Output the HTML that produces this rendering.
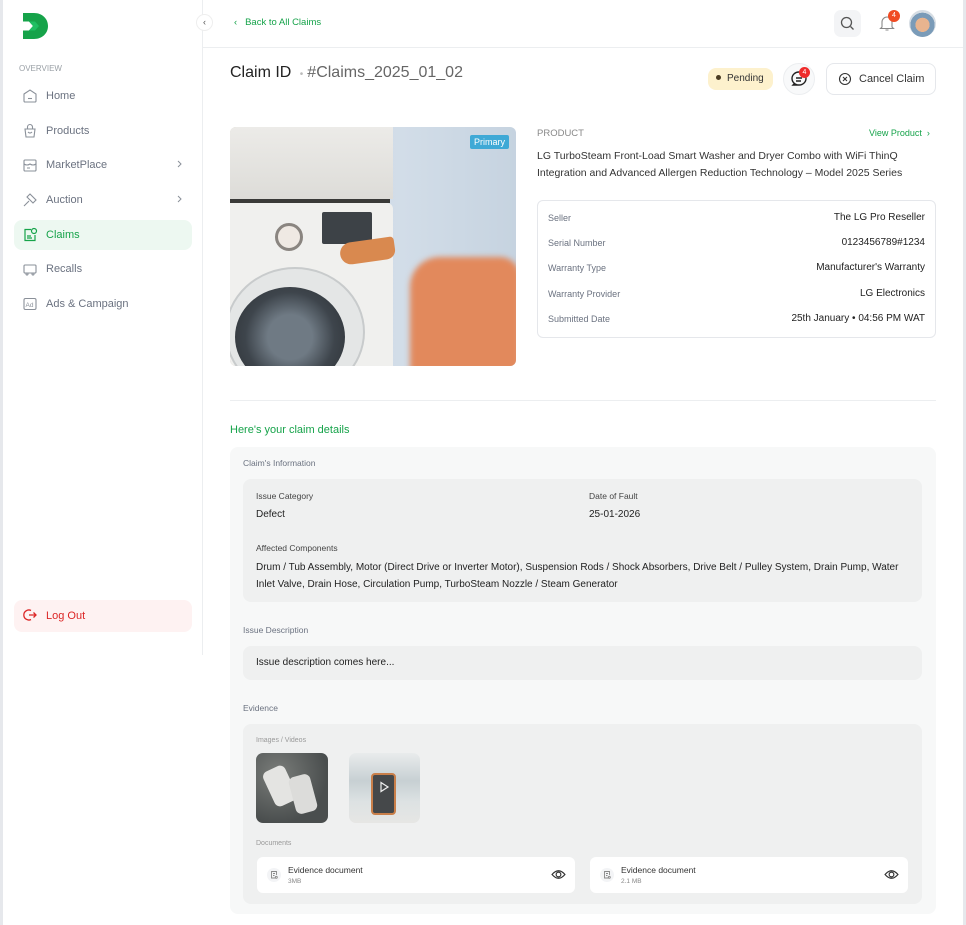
<!DOCTYPE html>
<html><head><meta charset="utf-8"><style>
*{box-sizing:border-box;margin:0;padding:0}
body{width:966px;height:925px;overflow:hidden;background:#fff;font-family:"Liberation Sans",sans-serif;color:#1f2328;position:relative}
.abs{position:absolute}
.strip{position:absolute;top:0;bottom:0;background:#e6e8ec}
.side{left:3px;top:0;width:200px;height:655px;border-right:1px solid #eceef0;position:absolute}
.nav{position:absolute;left:14px;width:178px;height:30px;border-radius:8px;display:flex;align-items:center;padding-left:32px;font-size:11px;color:#6b7280}
.nav svg{position:absolute;left:8px;top:7px}
.nav .ch{position:absolute;right:8px;top:8px;left:auto}
.lbl{font-size:9px;color:#6b7280}
.val{font-size:10px;color:#222}
.row{position:absolute;left:548px;width:377px;display:flex;justify-content:space-between;align-items:center}
.box{position:absolute;background:#eff0f0;border-radius:8px}
</style></head><body>
<div class="strip" style="left:0;width:3px"></div>
<div class="strip" style="right:0;width:3px"></div>
<div class="side"></div>
<!-- logo -->
<svg class="abs" style="left:22px;top:12px" width="27" height="28" viewBox="0 0 27 28"><path d="M1 1h11c8 0 14 5.5 14 13S20 27 12 27H1v-8.5h6L11 14 7 9.5H1z" fill="#16a34a"/><path d="M7 9.5L11 14l-4 4.5h6l4-4.5-4-4.5z" fill="#1fbf62"/></svg>
<div class="abs" style="left:196px;top:14px;width:17px;height:17px;border-radius:50%;background:#fff;border:1px solid #eee;font-size:9px;color:#555;text-align:center;line-height:15px">‹</div>
<div class="abs" style="left:19px;top:64px;font-size:8px;color:#9aa0a6">OVERVIEW</div>
<div class="nav" style="top:81px"><svg width="16" height="16" viewBox="0 0 16 16" fill="none" stroke="#8a9099" stroke-width="1.1"><path d="M2 6l6-4 6 4v7a1 1 0 0 1-1 1H3a1 1 0 0 1-1-1z"/><path d="M6 10.5h4"/></svg>Home</div>
<div class="nav" style="top:116px"><svg width="16" height="16" viewBox="0 0 16 16" fill="none" stroke="#8a9099" stroke-width="1.1"><path d="M3 6h10l-1 8H4z"/><path d="M5.5 6V4a2.5 2.5 0 0 1 5 0v2M6 9q2 2 4 0"/></svg>Products</div>
<div class="nav" style="top:150px"><svg width="16" height="16" viewBox="0 0 16 16" fill="none" stroke="#8a9099" stroke-width="1.1"><rect x="2" y="3" width="12" height="11" rx="1"/><path d="M2 7q3 2 6 0q3 2 6 0M5 11h3"/></svg>MarketPlace<svg class="ch" width="10" height="12" viewBox="0 0 10 12" fill="none" stroke="#8a9099"><path d="M4 3l3 3-3 3"/></svg></div>
<div class="nav" style="top:185px"><svg width="16" height="16" viewBox="0 0 16 16" fill="none" stroke="#8a9099" stroke-width="1.1"><path d="M8 2l6 6-3 3-6-6zM7 9l-5 5"/></svg>Auction<svg class="ch" width="10" height="12" viewBox="0 0 10 12" fill="none" stroke="#8a9099"><path d="M4 3l3 3-3 3"/></svg></div>
<div class="nav" style="top:220px;background:#edf8f1;color:#16a34a"><svg width="16" height="16" viewBox="0 0 16 16" fill="none" stroke="#16a34a" stroke-width="1.2"><path d="M9 2.5H3v11h10V8"/><circle cx="12" cy="4" r="2.5"/><path d="M5 9h4M5 11h5"/></svg>Claims</div>
<div class="nav" style="top:254px"><svg width="16" height="16" viewBox="0 0 16 16" fill="none" stroke="#8a9099" stroke-width="1.1"><rect x="2" y="4" width="12" height="8" rx="1"/><circle cx="5" cy="13" r="1"/><circle cx="11" cy="13" r="1"/></svg>Recalls</div>
<div class="nav" style="top:289px"><svg width="16" height="16" viewBox="0 0 16 16" fill="none" stroke="#8a9099" stroke-width="1.1"><rect x="2" y="2.5" width="12" height="11" rx="1.5"/><text x="3.5" y="11" font-size="6.5" fill="#8a9099" stroke="none" font-family="Liberation Sans">Ad</text></svg>Ads &amp; Campaign</div>
<div class="nav" style="top:600px;height:32px;background:#fef2f2;color:#dc2626"><svg width="16" height="16" viewBox="0 0 16 16" fill="none" stroke="#dc2626" stroke-width="1.3"><path d="M9 3.5A5 5 0 1 0 9 12.5M7 8h7M11.5 5.5L14 8l-2.5 2.5"/></svg>Log Out</div>

<!-- header -->
<div class="abs" style="left:203px;right:3px;top:47px;height:1px;background:#eceef0"></div>
<div class="abs" style="left:234px;top:17px;font-size:9.5px;color:#16a34a">‹&nbsp;&nbsp;&nbsp;Back to All Claims</div>
<div class="abs" style="left:834px;top:10px;width:27px;height:27px;border-radius:7px;background:#f3f4f6"><svg width="27" height="27" viewBox="0 0 27 27" fill="none" stroke="#555" stroke-width="1.3"><circle cx="12.5" cy="12.5" r="5"/><path d="M16.5 16.5l3 3"/></svg></div>
<svg class="abs" style="left:877px;top:13px" width="20" height="20" viewBox="0 0 20 20" fill="none" stroke="#888" stroke-width="1.1"><path d="M5 14V9a5 5 0 0 1 10 0v5l1.5 1.5h-13zM8.5 17h3"/></svg>
<div class="abs" style="left:888px;top:10px;width:12px;height:12px;border-radius:50%;background:#f04b23;color:#fff;font-size:7px;text-align:center;line-height:12px">4</div>
<div class="abs" style="left:909px;top:10px;width:27px;height:27px;border-radius:50%;background:radial-gradient(circle at 50% 55%,#e8b48f 0 35%,#7a9bb8 36% 60%,#d6dde4 61%)"></div>

<div class="abs" style="left:230px;top:64px;font-size:16px;color:#222">Claim ID <span style="color:#bbb;font-size:10px;margin:0 4px">•</span><span style="color:#666">#Claims_2025_01_02</span></div>
<div class="abs" style="left:708px;top:68px;width:65px;height:22px;border-radius:8px;background:#fdf1cd;font-size:10px;color:#333;line-height:22px;padding-left:8px"><span style="display:inline-block;width:5px;height:5px;border-radius:50%;background:#4a3b22;margin-right:6px;vertical-align:1px"></span>Pending</div>
<div class="abs" style="left:783px;top:63px;width:32px;height:32px;border-radius:50%;border:1px solid #eceef0;background:#f8f9fa"><svg width="30" height="30" viewBox="0 0 30 30" fill="none" stroke="#222" stroke-width="1.4"><path d="M15 8a7 6.5 0 1 0 0 13h-6l2-2"/><path d="M15 8a7 6.5 0 0 1 0 13"/><path d="M12 14h6M12 17h5"/></svg></div>
<div class="abs" style="left:799px;top:67px;width:11px;height:11px;border-radius:50%;background:#ef2c2c;color:#fff;font-size:7px;text-align:center;line-height:11px">4</div>
<div class="abs" style="left:826px;top:63px;width:110px;height:32px;border-radius:8px;border:1px solid #e5e7eb;font-size:11px;color:#333;line-height:30px;padding-left:32px">Cancel Claim</div>
<svg class="abs" style="left:838px;top:72px" width="14" height="14" viewBox="0 0 14 14" fill="none" stroke="#333" stroke-width="1.1"><circle cx="7" cy="7" r="5.5"/><path d="M5 5l4 4M9 5l-4 4"/></svg>

<!-- image -->
<div class="abs" style="left:230px;top:127px;width:286px;height:239px;border-radius:6px;overflow:hidden;background:linear-gradient(90deg,#cfc6ba 0,#d8d2c8 13%,#c9d7e4 20%,#d2dde8 60%,#c6d3e0 100%)">
<div class="abs" style="left:0;top:0;width:163px;height:72px;background:linear-gradient(180deg,#ecebe8,#dddcd8)"></div>
<div class="abs" style="left:0;top:72px;width:160px;height:4px;background:#3a3a38"></div>
<div class="abs" style="left:0;top:76px;width:163px;height:163px;background:#f0f0ee;border-radius:0 6px 0 0"></div>
<div class="abs" style="left:45px;top:96px;width:28px;height:28px;border-radius:50%;border:3px solid #8a8580;background:#efe9e3"></div>
<div class="abs" style="left:92px;top:85px;width:50px;height:32px;background:#3d4247;border-radius:2px"></div>
<div class="abs" style="left:-5px;top:140px;width:140px;height:130px;border-radius:50%;background:#e4e6e6;border:2px solid #c8cbcc"></div>
<div class="abs" style="left:5px;top:160px;width:110px;height:100px;border-radius:50%;background:radial-gradient(circle,#6f7a84 0 30%,#3e454c 60%,#2b2f33 100%)"></div>
<div class="abs" style="left:110px;top:113px;width:55px;height:22px;background:#d9894f;border-radius:12px 4px 10px 12px;transform:rotate(-8deg)"></div>
<div class="abs" style="left:180px;top:130px;width:110px;height:115px;background:#e2895c;border-radius:30px 20px 0 0;filter:blur(3px)"></div>
<div class="abs" style="right:7px;top:8px;background:#3fa9d6;color:#fff;font-size:9px;padding:2px 4px;border-radius:2px">Primary</div>
</div>

<div class="abs" style="left:537px;top:128px;font-size:9.5px;color:#888">PRODUCT</div>
<div class="abs" style="left:869px;top:128px;font-size:9px;color:#16a34a">View Product&nbsp;&nbsp;›</div>
<div class="abs" style="left:537px;top:148px;width:400px;font-size:10.5px;line-height:16.5px;color:#333">LG TurboSteam Front-Load Smart Washer and Dryer Combo with WiFi ThinQ Integration and Advanced Allergen Reduction Technology – Model 2025 Series</div>
<div class="abs" style="left:537px;top:200px;width:399px;height:138px;border:1px solid #e5e7eb;border-radius:6px"></div>
<div class="row" style="top:212px"><span class="lbl">Seller</span><span class="val">The LG Pro Reseller</span></div>
<div class="row" style="top:237px"><span class="lbl">Serial Number</span><span class="val">0123456789#1234</span></div>
<div class="row" style="top:262px"><span class="lbl">Warranty Type</span><span class="val">Manufacturer's Warranty</span></div>
<div class="row" style="top:288px"><span class="lbl">Warranty Provider</span><span class="val">LG Electronics</span></div>
<div class="row" style="top:313px"><span class="lbl">Submitted Date</span><span class="val">25th January • 04:56 PM WAT</span></div>

<div class="abs" style="left:230px;top:400px;width:706px;height:1px;background:#eceef0"></div>
<div class="abs" style="left:230px;top:424px;font-size:11px;color:#16a34a">Here's your claim details</div>

<div class="abs" style="left:230px;top:447px;width:706px;height:467px;background:#f7f8f8;border-radius:8px"></div>
<div class="abs lbl" style="left:243px;top:458px;font-size:8.5px">Claim's Information</div>
<div class="box" style="left:243px;top:479px;width:679px;height:123px"></div>
<div class="abs" style="left:256px;top:491px;font-size:8.5px;color:#444">Issue Category</div>
<div class="abs val" style="left:256px;top:509px">Defect</div>
<div class="abs" style="left:589px;top:491px;font-size:8.5px;color:#444">Date of Fault</div>
<div class="abs val" style="left:589px;top:509px">25-01-2026</div>
<div class="abs" style="left:256px;top:543px;font-size:8.5px;color:#444">Affected Components</div>
<div class="abs val" style="left:256px;top:560px;width:660px;line-height:16.5px">Drum / Tub Assembly, Motor (Direct Drive or Inverter Motor), Suspension Rods / Shock Absorbers, Drive Belt / Pulley System, Drain Pump, Water Inlet Valve, Drain Hose, Circulation Pump, TurboSteam Nozzle / Steam Generator</div>

<div class="abs lbl" style="left:243px;top:625px;font-size:8.5px">Issue Description</div>
<div class="box" style="left:243px;top:646px;width:679px;height:34px"></div>
<div class="abs val" style="left:256px;top:657px">Issue description comes here...</div>

<div class="abs lbl" style="left:243px;top:703px;font-size:8.5px">Evidence</div>
<div class="box" style="left:243px;top:724px;width:679px;height:180px"></div>
<div class="abs" style="left:256px;top:737px;font-size:7px;color:#999">Images / Videos</div>
<div class="abs" style="left:256px;top:753px;width:72px;height:70px;border-radius:7px;overflow:hidden;background:radial-gradient(circle at 30% 30%,#7a7d7a,#4a4e4e 70%)">
<div class="abs" style="left:12px;top:14px;width:24px;height:38px;background:#e4e4e2;border-radius:6px;transform:rotate(-25deg)"></div>
<div class="abs" style="left:36px;top:22px;width:22px;height:38px;background:#dcdcda;border-radius:6px;transform:rotate(-15deg)"></div></div>
<div class="abs" style="left:349px;top:753px;width:71px;height:70px;border-radius:7px;background:linear-gradient(180deg,#e9ecec 0%,#c7d0d3 40%,#dde2e3 70%,#e6e6e4 100%)">
<div class="abs" style="left:22px;top:20px;width:25px;height:42px;border-radius:4px;background:#45484a;border:2px solid #c97f4a"></div>
<svg class="abs" style="left:28px;top:27px" width="14" height="14" viewBox="0 0 14 14" fill="none" stroke="#eee" stroke-width="1.2"><path d="M4 2.5l7 4.5-7 4.5z"/></svg></div>
<div class="abs" style="left:256px;top:840px;font-size:7px;color:#999">Documents</div>
<div class="abs" style="left:257px;top:857px;width:318px;height:36px;background:#fff;border-radius:6px"></div>
<div class="abs" style="left:590px;top:857px;width:318px;height:36px;background:#fff;border-radius:6px"></div>
<div class="abs" style="left:267px;top:868px;width:14px;height:14px;border-radius:50%;background:#f3f4f6"><svg width="14" height="14" viewBox="0 0 14 14" fill="none" stroke="#888" stroke-width=".9"><path d="M9 10H4.5V3.5h5V7M6 5.5h2M6 7.5h1.5"/><circle cx="9.3" cy="9.3" r="1"/></svg></div>
<div class="abs" style="left:600px;top:868px;width:14px;height:14px;border-radius:50%;background:#f3f4f6"><svg width="14" height="14" viewBox="0 0 14 14" fill="none" stroke="#888" stroke-width=".9"><path d="M9 10H4.5V3.5h5V7M6 5.5h2M6 7.5h1.5"/><circle cx="9.3" cy="9.3" r="1"/></svg></div>
<div class="abs" style="left:288px;top:865px;font-size:8.5px;color:#333">Evidence document</div>
<div class="abs" style="left:288px;top:878px;font-size:6.5px;color:#888">3MB</div>
<div class="abs" style="left:621px;top:865px;font-size:8.5px;color:#333">Evidence document</div>
<div class="abs" style="left:621px;top:878px;font-size:6.5px;color:#888">2.1 MB</div>
<svg class="abs" style="left:551px;top:867px" width="15" height="15" viewBox="0 0 14 14" fill="none" stroke="#333" stroke-width="1.1"><path d="M1 7q6-7 12 0q-6 7-12 0z"/><circle cx="7" cy="7" r="2.2"/></svg>
<svg class="abs" style="left:884px;top:867px" width="15" height="15" viewBox="0 0 14 14" fill="none" stroke="#333" stroke-width="1.1"><path d="M1 7q6-7 12 0q-6 7-12 0z"/><circle cx="7" cy="7" r="2.2"/></svg>
</body></html>
